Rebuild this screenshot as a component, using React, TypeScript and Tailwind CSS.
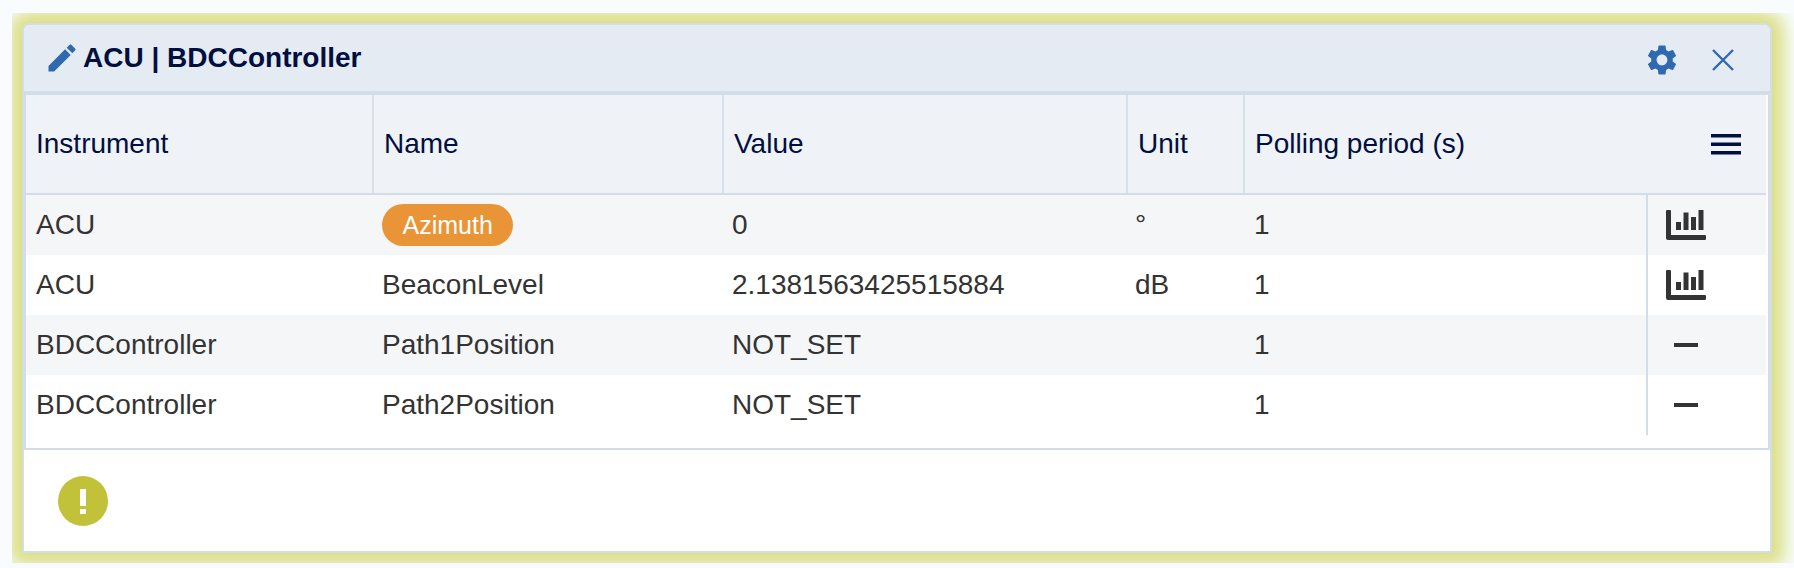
import React from "react";

const rows = [
  { instrument: "ACU", name: "Azimuth", value: "0", unit: "°", period: "1", chart: true, highlight: true },
  { instrument: "ACU", name: "BeaconLevel", value: "2.1381563425515884", unit: "dB", period: "1", chart: true },
  { instrument: "BDCController", name: "Path1Position", value: "NOT_SET", unit: "", period: "1", chart: false },
  { instrument: "BDCController", name: "Path2Position", value: "NOT_SET", unit: "", period: "1", chart: false },
];

function ChartIcon() {
  return (
    <svg width="40" height="30" viewBox="0 0 40 30" className="text-[#333333]" fill="currentColor">
      <path d="M0 1a1 1 0 0 1 1-1h3a1 1 0 0 1 1 1v24h34a1 1 0 0 1 1 1v3a1 1 0 0 1-1 1H2a2 2 0 0 1-2-2z" />
      <rect x="10" y="12" width="5" height="8" />
      <rect x="17.5" y="2.5" width="5" height="17.5" />
      <rect x="25" y="7" width="5" height="13" />
      <rect x="32.5" y="0" width="5" height="20" />
    </svg>
  );
}

export default function App() {
  return (
    <div className="h-[568px] w-full overflow-hidden bg-[#f8fcff] font-['Liberation_Sans',Arial,sans-serif]">
      {/* glow gets clipped by this box on the left/top/bottom */}
      <div className="ml-[12px] mt-[13px] h-[550px] overflow-hidden pl-[10px] pr-[22px] pt-[10px]">
        <div className="h-[530px] overflow-hidden rounded-t-[8px] border-2 border-[#d2dde8] bg-white shadow-[0_0_18px_12px_#dbde80]">
          {/* title bar */}
          <div className="flex h-[68px] items-center justify-between border-b-2 border-[#d2dde8] bg-[#e5ebf2] pl-[20px] pr-[36px] text-[#2f69b0]">
            <div className="flex items-center gap-[3px]">
              <svg width="36" height="36" viewBox="0 0 24 24" fill="currentColor">
                <path d="M3 17.25V21h3.75L17.81 9.94l-3.75-3.75L3 17.25zM20.71 7.04c.39-.39.39-1.02 0-1.41l-2.34-2.34c-.39-.39-1.02-.39-1.41 0l-1.83 1.83 3.75 3.75 1.83-1.83z" />
              </svg>
              <span className="text-[28px] font-bold leading-none text-[#000f3f]">ACU | BDCController</span>
            </div>
            <div className="flex items-center gap-[32px] pt-[4px]">
              <svg width="36" height="36" viewBox="0 0 24 24" fill="currentColor">
                <path d="M19.14 12.94c.04-.3.06-.61.06-.94 0-.32-.02-.64-.07-.94l2.03-1.58c.18-.14.23-.41.12-.61l-1.92-3.32c-.12-.22-.37-.29-.59-.22l-2.39.96c-.5-.38-1.03-.7-1.62-.94l-.36-2.54c-.04-.24-.24-.41-.48-.41h-3.84c-.24 0-.43.17-.47.41l-.36 2.54c-.59.24-1.13.57-1.62.94l-2.39-.96c-.22-.08-.47 0-.59.22L2.74 8.87c-.12.21-.08.47.12.61l2.03 1.58c-.05.3-.09.63-.09.94s.02.64.07.94l-2.03 1.58c-.18.14-.23.41-.12.61l1.92 3.32c.12.22.37.29.59.22l2.39-.96c.5.38 1.03.7 1.62.94l.36 2.54c.05.24.24.41.48.41h3.84c.24 0 .44-.17.47-.41l.36-2.54c.59-.24 1.13-.56 1.62-.94l2.39.96c.22.08.47 0 .59-.22l1.92-3.32c.12-.22.07-.47-.12-.61l-2.01-1.58zM12 15.6c-1.98 0-3.6-1.62-3.6-3.6s1.62-3.6 3.6-3.6 3.6 1.62 3.6 3.6-1.62 3.6-3.6 3.6z" />
              </svg>
              <svg width="22" height="22" viewBox="0 0 22 22" stroke="currentColor" strokeWidth="2.4" fill="none">
                <path d="M1 1l20 20M21 1L1 21" />
              </svg>
            </div>
          </div>

          {/* table */}
          <div className="h-[357px] border-2 border-[#d2dde8] bg-white pr-[2px]">
            <div className="grid grid-cols-[348px_350px_404px_117px_401px_120px] text-[28px] leading-none">
              <div className="col-span-6 grid h-[100px] grid-cols-subgrid items-stretch border-b-2 border-[#d2dde8] bg-[#eff2f7] text-[#000f3f]">
                {["Instrument", "Name", "Value", "Unit"].map((h) => (
                  <div key={h} className="flex items-center border-r-2 border-[#d8e1ea] pl-[10px]">{h}</div>
                ))}
                <div className="col-span-2 flex items-center justify-between pl-[10px] pr-[25px]">
                  Polling period (s)
                  <svg width="30" height="21" viewBox="0 0 30 21" fill="currentColor">
                    <rect y="0" width="30" height="3.5" />
                    <rect y="8.5" width="30" height="3.5" />
                    <rect y="17" width="30" height="3.5" />
                  </svg>
                </div>
              </div>
              {rows.map((r, i) => (
                <div key={i} className={`col-span-6 grid h-[60px] grid-cols-subgrid items-center text-[#333333] ${i % 2 === 0 ? "bg-[#f5f6f8]" : "bg-white"}`}>
                  <div className="pl-[10px]">{r.instrument}</div>
                  <div className="pl-[8px]">
                    {r.highlight ? (
                      <span className="inline-flex h-[42px] items-center rounded-full bg-[#e99436] px-[20.5px] text-[25px] text-white">{r.name}</span>
                    ) : (
                      r.name
                    )}
                  </div>
                  <div className="pl-[8px]">{r.value}</div>
                  <div className="pl-[7px]">{r.unit}</div>
                  <div className="pl-[9px]">{r.period}</div>
                  <div className="flex h-full items-center border-l-[2px] border-[#d2dde8] pl-[18px]">
                    <div className="flex w-[40px] justify-center">
                      {r.chart ? <ChartIcon /> : <div className="h-[4px] w-[24px] bg-[#333333]" />}
                    </div>
                  </div>
                </div>
              ))}
            </div>
          </div>

          {/* footer */}
          <div className="flex items-center pl-[34px] pt-[26px]">
            <div className="flex h-[50px] w-[50px] items-center justify-center rounded-full bg-[#c2c13a]">
              <svg width="6" height="25" viewBox="0 0 6 25" fill="white">
                <rect x="0" y="0" width="6" height="17" />
                <rect x="0" y="20" width="6" height="5" />
              </svg>
            </div>
          </div>
        </div>
      </div>
    </div>
  );
}
